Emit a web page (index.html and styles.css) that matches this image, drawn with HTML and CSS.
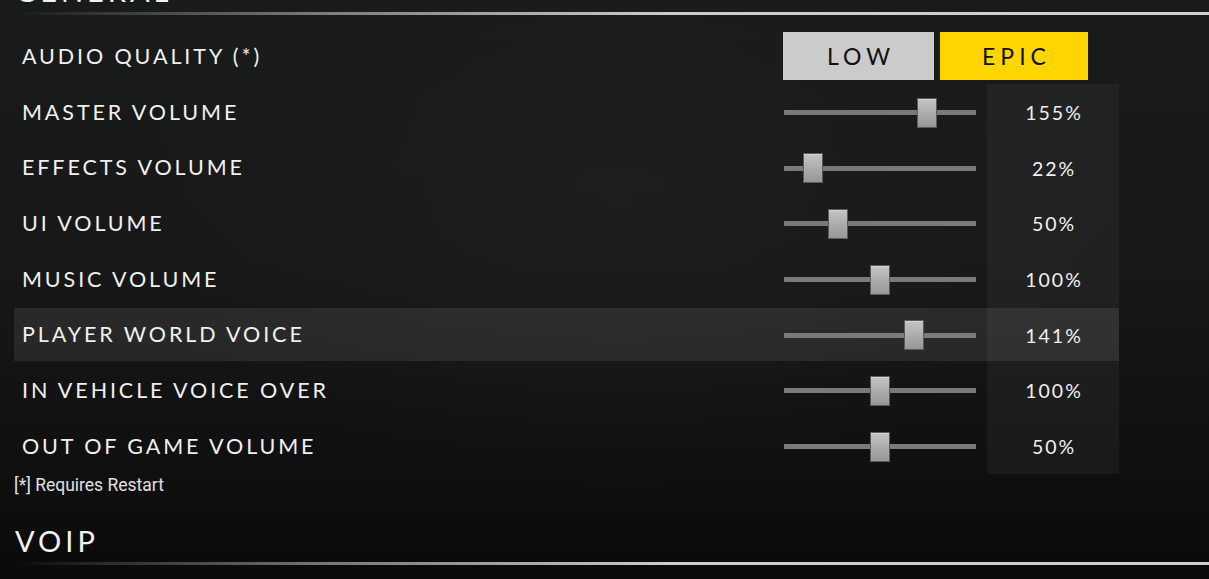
FILE: index.html
```html
<!DOCTYPE html>
<html lang="en">
<head>
<meta charset="utf-8">
<title>Audio Settings</title>
<link rel="stylesheet" href="styles.css">
</head>
<body>
<main class="page">
  <section class="section">
    <h2 class="section-title section-title--clipped">GENERAL</h2>
    <div class="rule"></div>
    <div class="settings">
      <div class="row">
        <div class="label">AUDIO QUALITY (*)</div>
        <div class="choices">
          <button class="choice choice--low">LOW</button>
          <button class="choice choice--epic">EPIC</button>
        </div>
      </div>
      <div class="row">
        <div class="label">MASTER VOLUME</div>
        <div class="slider"><div class="track"></div><div class="thumb" style="left: 133px"></div></div>
        <div class="value">155%</div>
      </div>
      <div class="row">
        <div class="label">EFFECTS VOLUME</div>
        <div class="slider"><div class="track"></div><div class="thumb" style="left: 19px"></div></div>
        <div class="value">22%</div>
      </div>
      <div class="row">
        <div class="label">UI VOLUME</div>
        <div class="slider"><div class="track"></div><div class="thumb" style="left: 44px"></div></div>
        <div class="value">50%</div>
      </div>
      <div class="row">
        <div class="label">MUSIC VOLUME</div>
        <div class="slider"><div class="track"></div><div class="thumb" style="left: 86px"></div></div>
        <div class="value">100%</div>
      </div>
      <div class="row row--active">
        <div class="label">PLAYER WORLD VOICE</div>
        <div class="slider"><div class="track"></div><div class="thumb" style="left: 120px"></div></div>
        <div class="value">141%</div>
      </div>
      <div class="row">
        <div class="label">IN VEHICLE VOICE OVER</div>
        <div class="slider"><div class="track"></div><div class="thumb" style="left: 86px"></div></div>
        <div class="value">100%</div>
      </div>
      <div class="row">
        <div class="label">OUT OF GAME VOLUME</div>
        <div class="slider"><div class="track"></div><div class="thumb" style="left: 86px"></div></div>
        <div class="value">50%</div>
      </div>
    </div>
    <p class="note">[*] Requires Restart</p>
  </section>
  <section class="section">
    <h2 class="section-title">VOIP</h2>
    <div class="rule"></div>
  </section>
</main>
</body>
</html>
```

FILE: styles.css
```css
* { box-sizing: border-box; }

html, body {
  margin: 0;
  height: 100%;
}

body {
  width: 1209px;
  height: 579px;
  overflow: hidden;
  background:
    radial-gradient(ellipse 700px 420px at 620px 200px, rgba(40,40,40,0.35), rgba(0,0,0,0) 70%),
    linear-gradient(180deg, #191a1a 0%, #181818 45%, #101010 80%, #0a0a0a 100%);
  color: #f0f0f0;
  font-family: "Lato", "Open Sans", sans-serif;
}

.page {
  padding-left: 14px;
}

.section-title {
  margin: 0;
  font-weight: 400;
  font-size: 29px;
  line-height: 30px;
  letter-spacing: 4px;
  color: #f2f2f2;
  padding-left: 1px;
}

.section-title--clipped {
  margin-top: -24px;
}

.rule {
  height: 3px;
  margin-top: 6px;
  background: linear-gradient(90deg, rgba(200,200,200,0) 0%, rgba(200,200,200,0.55) 25%, #cdcdcd 55%, #d0d0d0 100%);
}

.settings {
  margin-top: 13px;
  width: 1105px;
}

.row {
  height: 55.7px;
  display: grid;
  grid-template-columns: 1fr 192px 132px;
  column-gap: 11px;
  align-items: center;
  padding-left: 8px;
}

.row--active {
  background: linear-gradient(rgba(255,255,255,0.082), rgba(255,255,255,0.082)) center / 100% 53px no-repeat;
}

.label {
  font-size: 21.5px;
  letter-spacing: 2.9px;
  color: #f0f0f0;
  white-space: nowrap;
}

.choices {
  grid-column: 2 / 4;
  display: flex;
  gap: 6px;
  margin-left: -1px;
  margin-top: 1px;
}

.choice {
  height: 48px;
  border: 0;
  padding: 0 0 0 5px;
  font-family: inherit;
  font-size: 23px;
  letter-spacing: 5px;
  color: #111;
}

.choice--low {
  width: 151px;
  background: #cbcbcb;
}

.choice--epic {
  width: 148px;
  background: #ffd500;
}

.slider {
  position: relative;
  height: 30px;
  margin-top: 2px;
}

.track {
  position: absolute;
  left: 0;
  right: 0;
  top: 12.5px;
  height: 5px;
  background: #7a7a7a;
}

.thumb {
  position: absolute;
  top: 0;
  width: 20px;
  height: 30px;
  background: linear-gradient(180deg, #c4c4c4 0%, #a8a8a8 60%, #979797 100%);
  border: 1px solid #5a5a5a;
  box-shadow: inset 0 1px 0 rgba(255,255,255,0.25);
}

.value {
  align-self: stretch;
  display: flex;
  align-items: center;
  justify-content: center;
  background: rgba(255,255,255,0.043);
  font-size: 19.5px;
  letter-spacing: 2px;
  padding-left: 2px;
  padding-top: 2px;
  color: #f0f0f0;
}

.note {
  margin: 1px 0 0;
  font-family: "Roboto", "Liberation Sans", sans-serif;
  font-size: 17.5px;
  line-height: 20px;
  color: #e0e0e0;
}

.section + .section {
  margin-top: 31px;
}
```
